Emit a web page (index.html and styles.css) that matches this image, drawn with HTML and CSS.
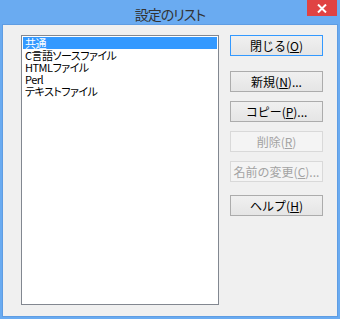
FILE: index.html
```html
<!DOCTYPE html>
<html lang="ja">
<head>
    <meta charset="UTF-8">
    <title>設定のリスト</title>
    <link rel="stylesheet" href="styles.css">
</head>
<body>
    <div class="window">
        <!-- タイトルバー -->
        <div class="titlebar">
            <span class="title">設定のリスト</span>
            <span class="close">
                <svg width="10" height="9" viewBox="0 0 10 9">
                    <path d="M1 0.5 L9 8.5 M9 0.5 L1 8.5" stroke="#fff" stroke-width="2"/>
                </svg>
            </span>
        </div>
        <div class="client">
            <!-- 設定の一覧 -->
            <ul class="listbox">
                <li class="selected">共通</li>
                <li>C言語ソースファイル</li>
                <li>HTMLファイル</li>
                <li>Perl</li>
                <li>テキストファイル</li>
            </ul>
            <!-- ボタン -->
            <div class="buttons">
                <button class="btn default">閉じる(<u>O</u>)</button>
                <button class="btn gap-big">新規(<u>N</u>)...</button>
                <button class="btn">コピー(<u>P</u>)...</button>
                <button class="btn" disabled>削除(<u>R</u>)</button>
                <button class="btn" disabled>名前の変更(<u>C</u>)...</button>
                <button class="btn gap-help">ヘルプ(<u>H</u>)</button>
            </div>
        </div>
    </div>
</body>
</html>
```

FILE: styles.css
```css
body {
    margin: 0;
    padding: 0;
    font-family: "Noto Sans CJK JP", "Liberation Sans", sans-serif;
    font-size: 12px;
    color: #000;
}
.window {
    width: 340px;
    height: 319px;
    background-color: #6aabf1;
    display: flex;
    flex-direction: column;
}
.titlebar {
    height: 25px;
    position: relative;
    display: flex;
    justify-content: center;
    align-items: center;
}
.title {
    font-size: 14px;
    color: #333;
    letter-spacing: -1px;
    font-feature-settings: "palt";
    margin-top: 2px;
}
.close {
    position: absolute;
    top: 0;
    right: 3px;
    width: 30px;
    height: 16px;
    background-color: #e04343;
    display: flex;
    justify-content: center;
    align-items: center;
}
.client {
    flex: 1;
    margin: 0 3px 3px 3px;
    background-color: #f0f0f0;
    display: flex;
    padding: 10px 0 0 18px;
    box-shadow: 0 0 0 1px #5f9de3;
}
.listbox {
    list-style: none;
    margin: 0;
    padding: 1px;
    width: 194px;
    height: 266px;
    border: 1px solid #828790;
    background-color: #fff;
}
.listbox li {
    height: 12px;
    line-height: 12px;
    padding-left: 2px;
    font-size: 11px;
    letter-spacing: -0.5px;
    font-feature-settings: "palt";
    white-space: nowrap;
}
.listbox li.selected {
    background-color: #3399ff;
    color: #fff;
}
.buttons {
    margin-left: 11px;
    display: flex;
    flex-direction: column;
    gap: 9px;
}
.btn {
    width: 93px;
    height: 21px;
    padding: 0;
    font-family: "Noto Sans CJK JP", "Liberation Sans", sans-serif;
    font-size: 12px;
    line-height: 19px;
    color: #000;
    border: 1px solid #acacac;
    background: linear-gradient(#f0f0f0, #e5e5e5);
    border-radius: 0;
}
.btn.default {
    border-color: #3399ff;
}
.btn.gap-big {
    margin-top: 6px;
}
.btn.gap-help {
    margin-top: 4px;
}
.btn:disabled {
    color: #a3a3a3;
    border-color: #d9d9d9;
    background: #f4f4f4;
}
```
